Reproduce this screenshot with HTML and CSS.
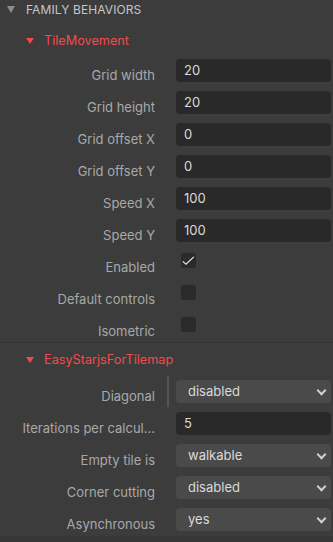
FILE: index.html
```html
<!DOCTYPE html>
<html lang="en">
<head>
    <meta charset="UTF-8">
    <meta name="viewport" content="width=device-width, initial-scale=1.0">
    <title>Family behaviors</title>
    <link rel="stylesheet" href="styles.css">
</head>
<body>
    <div class="panel-header">
        <span class="arrow arrow-grey"></span>
        <span>FAMILY BEHAVIORS</span>
    </div>

    <section class="group">
        <div class="group-title">
            <span class="arrow arrow-red"></span>
            <span>TileMovement</span>
        </div>
        <div class="rows">
            <div class="row">
                <label class="label">Grid width</label><span class="split"></span>
                <div class="field">20</div>
            </div>
            <div class="row">
                <label class="label">Grid height</label><span class="split"></span>
                <div class="field">20</div>
            </div>
            <div class="row">
                <label class="label">Grid offset X</label><span class="split"></span>
                <div class="field">0</div>
            </div>
            <div class="row">
                <label class="label">Grid offset Y</label><span class="split"></span>
                <div class="field">0</div>
            </div>
            <div class="row">
                <label class="label">Speed X</label><span class="split"></span>
                <div class="field">100</div>
            </div>
            <div class="row">
                <label class="label">Speed Y</label><span class="split"></span>
                <div class="field">100</div>
            </div>
            <div class="row">
                <label class="label">Enabled</label><span class="split"></span>
                <div class="check-wrap">
                    <span class="checkbox">
                        <svg width="15" height="15" viewBox="0 0 15 15"><path d="M1.8 8.4 L5 11.3 L12.8 3.9" fill="none" stroke="#e8e8e8" stroke-width="1.2"/></svg>
                    </span>
                </div>
            </div>
            <div class="row">
                <label class="label">Default controls</label><span class="split"></span>
                <div class="check-wrap"><span class="checkbox"></span></div>
            </div>
            <div class="row">
                <label class="label">Isometric</label><span class="split"></span>
                <div class="check-wrap"><span class="checkbox"></span></div>
            </div>
        </div>
    </section>

    <section class="group group-second">
        <div class="group-title">
            <span class="arrow arrow-red"></span>
            <span>EasyStarjsForTilemap</span>
        </div>
        <div class="rows">
            <div class="row">
                <label class="label">Diagonal</label><span class="split active"></span>
                <div class="select">disabled<span class="chevron"></span></div>
            </div>
            <div class="row">
                <label class="label" title="Iterations per calculation">Iterations per calcul…</label><span class="split"></span>
                <div class="field">5</div>
            </div>
            <div class="row">
                <label class="label">Empty tile is</label><span class="split"></span>
                <div class="select">walkable<span class="chevron"></span></div>
            </div>
            <div class="row">
                <label class="label">Corner cutting</label><span class="split"></span>
                <div class="select">disabled<span class="chevron"></span></div>
            </div>
            <div class="row">
                <label class="label">Asynchronous</label><span class="split"></span>
                <div class="select">yes<span class="chevron"></span></div>
            </div>
        </div>
    </section>
    <div class="footer"></div>
</body>
</html>
```

FILE: styles.css
```css
body {
    margin: 0;
    background-color: #3c3c3c;
    font-family: Inter, "Noto Sans", sans-serif;
    font-size: 13px;
    color: #a9a9a9;
    width: 333px;
    height: 542px;
    overflow: hidden;
}
.panel-header {
    display: flex;
    align-items: center;
    height: 18px;
    padding-left: 7px;
    gap: 11px;
    font-size: 12px;
    color: #c6c6c6;
    letter-spacing: 0.1px;
}
.arrow {
    width: 0;
    height: 0;
    border-left: 4px solid transparent;
    border-right: 4px solid transparent;
}
.arrow-grey {
    border-top: 7px solid #8c8c8c;
    margin-top: 1px;
}
.arrow-red {
    border-top: 6px solid #f04a4a;
    margin-top: 1px;
}
.group-title {
    display: flex;
    align-items: center;
    gap: 10px;
    height: 16px;
    padding: 14px 0 11px 26px;
    color: #f14b4b;
    font-size: 12.7px;
}
.rows {
    display: flex;
    flex-direction: column;
    gap: 9px;
}
.row {
    display: flex;
    height: 23px;
}
.label {
    flex: 0 0 135px;
    padding-left: 20px;
    padding-top: 5px;
    line-height: 23px;
    height: 23px;
    text-align: right;
    white-space: nowrap;
    overflow: hidden;
    text-overflow: ellipsis;
}
.split {
    flex: 0 0 2px;
    margin: -4px 7px -4px 12px;
}
.split.active {
    background-color: #555555;
}
.field,
.select {
    flex: 0 0 155px;
    box-sizing: border-box;
    height: 23px;
    line-height: 23px;
    border-radius: 4px;
    color: #dadada;
}
.field {
    background-color: #292929;
    padding-left: 8px;
}
.select {
    display: flex;
    justify-content: space-between;
    align-items: center;
    background-color: #4a4a4a;
    padding: 0 6px 0 12px;
}
.chevron {
    width: 5px;
    height: 5px;
    border-right: 2px solid #cfcfcf;
    border-bottom: 2px solid #cfcfcf;
    transform: rotate(45deg);
    margin-top: -3px;
}
.check-wrap {
    padding: 2px 0 0 5px;
}
.checkbox {
    display: block;
    width: 15px;
    height: 15px;
    border-radius: 3px;
    background-color: #2a2a2a;
}
.checkbox svg {
    display: block;
}
.group-second {
    margin-top: 4px;
    border-top: 1px solid #343434;
}
.group-second .group-title {
    padding: 8px 0 13px 26px;
}
.footer {
    margin-top: 5px;
    height: 6px;
    background-color: #363636;
}
```
